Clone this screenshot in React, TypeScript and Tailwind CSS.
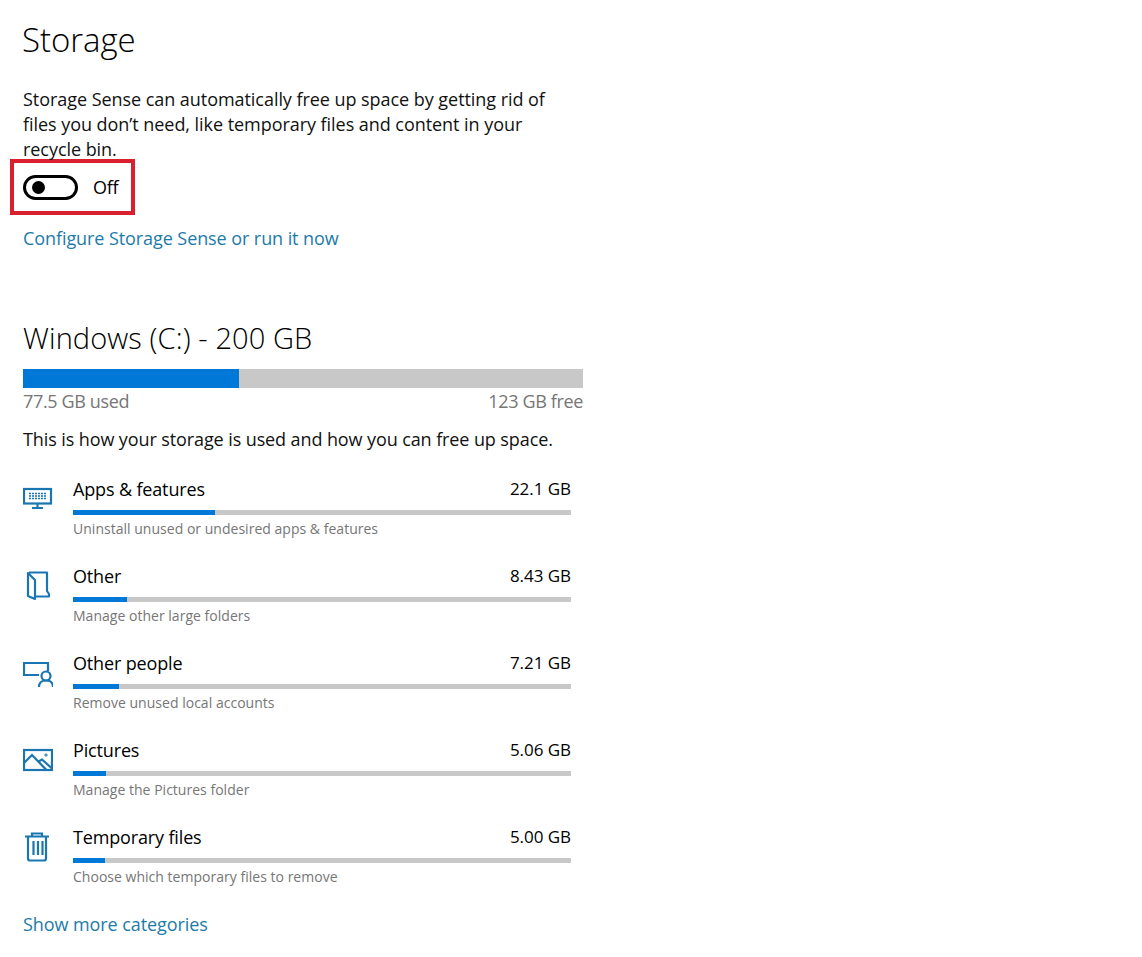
const categories = [
  { name: 'Apps & features', size: '22.1 GB', hint: 'Uninstall unused or undesired apps & features', used: 142, icon: 'apps' },
  { name: 'Other', size: '8.43 GB', hint: 'Manage other large folders', used: 54, icon: 'other' },
  { name: 'Other people', size: '7.21 GB', hint: 'Remove unused local accounts', used: 46, icon: 'people' },
  { name: 'Pictures', size: '5.06 GB', hint: 'Manage the Pictures folder', used: 33, icon: 'pictures' },
  { name: 'Temporary files', size: '5.00 GB', hint: 'Choose which temporary files to remove', used: 32, icon: 'trash' },
];

function CategoryIcon({ name }: { name: string }) {
  return (
    <svg width="30" height="30" viewBox="0 0 30 30" fill="none" stroke="#1a76b3" strokeWidth="2.2">
      {name === 'apps' && (
        <>
          <rect x="1" y="5" width="27" height="14.500" />
          <path d="M14.500 19v4.500M9 24h11" />
          <path d="M6 9.500h17M6 12h17M6 14.500h17" strokeDasharray="2 1" strokeWidth="1.500" />
        </>
      )}
      {name === 'other' && (
        <path d="M6 1.500H24V20l2 3v2.500H12M5 2l7 7v19l-7-3z" strokeLinejoin="round" />
      )}
      {name === 'people' && (
        <>
          <path d="M16 17H1V5h24v8" />
          <circle cx="23" cy="18" r="4.500" />
          <path d="M16 29c0-4.500 3-6.500 7-6.500s7 2 7 6.500" />
        </>
      )}
      {name === 'pictures' && (
        <>
          <rect x="1" y="5" width="28" height="20" />
          <path d="M1 18l8-8 14 14.500M15.500 16.500l3.500-2 10 9" />
          <circle cx="23" cy="10" r="0.500" />
        </>
      )}
      {name === 'trash' && (
        <path d="M2 4.500h24M9 4.500V1.500h10v3M5 4.500V26.500a2 2 0 0 0 2 2h14a2 2 0 0 0 2-2V4.500M10.500 9v14M15 9v14M19.500 9v14" />
      )}
    </svg>
  );
}

export default function App() {
  return (
    <div className="w-[1142px] h-[957px] bg-white pl-[23px] pt-[16px] text-black font-['Open_Sans',sans-serif] overflow-hidden">
      <h1 className="-ml-px text-[33px] leading-[48px] tracking-[-0.05px] font-light">Storage</h1>

      <p className="mt-[23px] w-[530px] text-[18px] leading-[25px] tracking-[-0.05px] text-[#111]">
        Storage Sense can automatically free up space by getting rid of files you don’t need, like temporary files and content in your recycle bin.
      </p>

      {/* Highlighted toggle */}
      <div className="-ml-[13px] -mt-[3px] flex h-[56px] w-[125px] items-center border-4 border-[#d9202e] pl-[9px]">
        <span className="flex h-[25px] w-[55px] items-center rounded-full border-[3px] border-black pl-[6px]">
          <span className="h-[13px] w-[13px] rounded-full bg-black" />
        </span>
        <span className="ml-[15px] text-[18px] tracking-[-0.3px]">Off</span>
      </div>

      <a className="mt-[10px] block text-[18px] leading-[26px] tracking-[-0.08px] text-[#1d7ba8]">Configure Storage Sense or run it now</a>

      <h2 className="mt-[67px] text-[29px] leading-[40px] tracking-[0.1px] font-light">Windows (C:) - 200 GB</h2>

      <div className="mt-[11px] h-[19px] w-[560px] bg-[#c8c8c8]">
        <div className="h-full w-[216px] bg-[#0078d7]" />
      </div>
      <div className="flex w-[560px] justify-between text-[18px] leading-[26px] tracking-[-0.35px] text-[#767676]">
        <span>77.5 GB used</span>
        <span>123 GB free</span>
      </div>

      <p className="mt-[12px] text-[18px] leading-[26px] tracking-[-0.1px] text-[#111]">
        This is how your storage is used and how you can free up space.
      </p>

      <div className="mt-[24px] flex flex-col gap-[10px]">
        {categories.map((c) => (
          <div key={c.name} className="flex h-[77px] w-[548px]">
            <div className="w-[50px] pt-[8px]">
              <CategoryIcon name={c.icon} />
            </div>
            <div className="flex-1">
              <div className="flex justify-between text-[18px] leading-[26px] tracking-[-0.15px]">
                <span>{c.name}</span>
                <span className="text-[17px] tracking-[-0.05px]">{c.size}</span>
              </div>
              <div className="mt-[8px] h-[5px] bg-[#c8c8c8]">
                <div className="h-full bg-[#0078d7]" style={{ width: c.used }} />
              </div>
              <div className="mt-[3px] text-[14px] leading-[22px] tracking-[0.02px] text-[#767676]">{c.hint}</div>
            </div>
          </div>
        ))}
      </div>

      <a className="mt-[10px] block text-[18px] leading-[26px] tracking-[-0.08px] text-[#1d7ba8]">Show more categories</a>
    </div>
  );
}
